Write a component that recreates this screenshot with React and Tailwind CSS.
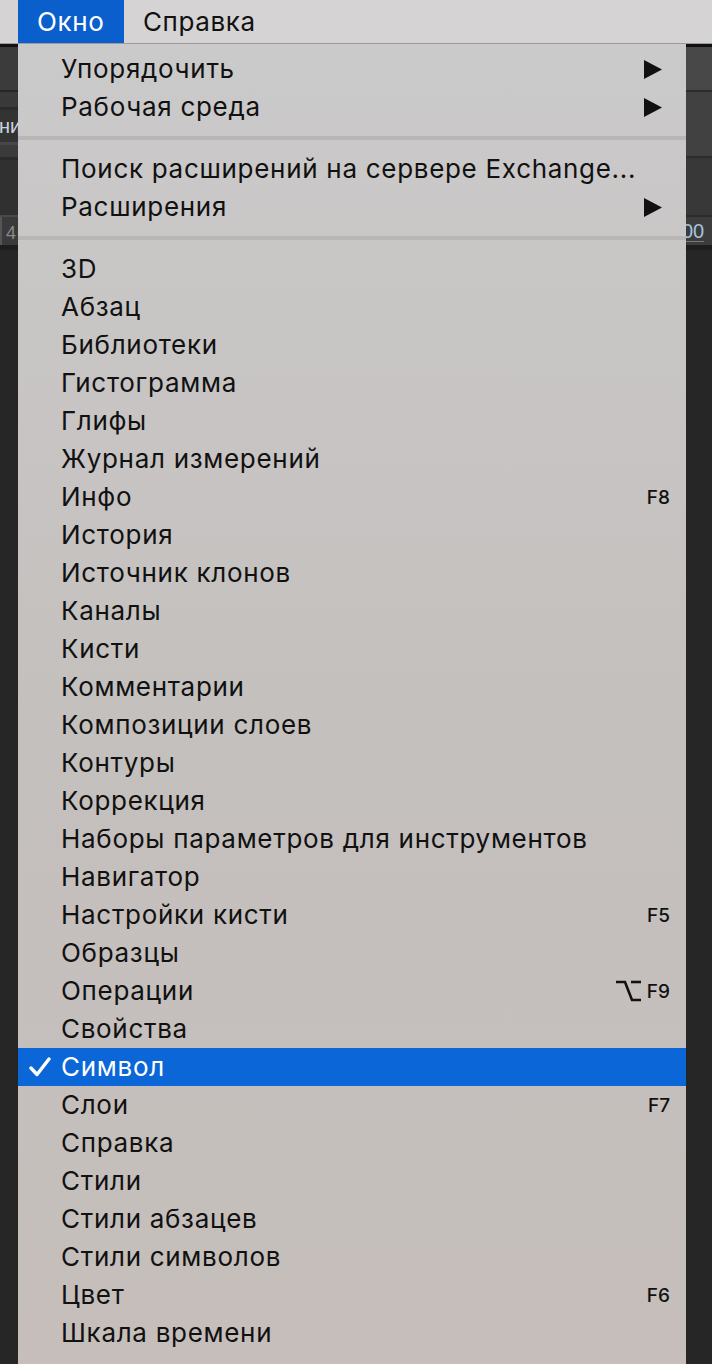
import React from "react";

const groups = [
  [
    { label: "Упорядочить", arrow: true },
    { label: "Рабочая среда", arrow: true },
  ],
  [
    { label: "Поиск расширений на сервере Exchange..." },
    { label: "Расширения", arrow: true },
  ],
  [
    { label: "3D" },
    { label: "Абзац" },
    { label: "Библиотеки" },
    { label: "Гистограмма" },
    { label: "Глифы" },
    { label: "Журнал измерений" },
    { label: "Инфо", key: "F8" },
    { label: "История" },
    { label: "Источник клонов" },
    { label: "Каналы" },
    { label: "Кисти" },
    { label: "Комментарии" },
    { label: "Композиции слоев" },
    { label: "Контуры" },
    { label: "Коррекция" },
    { label: "Наборы параметров для инструментов" },
    { label: "Навигатор" },
    { label: "Настройки кисти", key: "F5" },
    { label: "Образцы" },
    { label: "Операции", key: "F9", opt: true },
    { label: "Свойства" },
    { label: "Символ", checked: true },
    { label: "Слои", key: "F7" },
    { label: "Справка" },
    { label: "Стили" },
    { label: "Стили абзацев" },
    { label: "Стили символов" },
    { label: "Цвет", key: "F6" },
    { label: "Шкала времени" },
  ],
];

function Arrow() {
  return (
    <svg width="18" height="19" viewBox="0 0 18 19" className="ml-auto mr-[8px] shrink-0">
      <polygon points="0,0 18,9.5 0,19" fill="#111" />
    </svg>
  );
}

function Check() {
  return (
    <svg width="22" height="22" viewBox="0 0 22 22" className="absolute left-[11px] top-[8px]">
      <path d="M2 12 L8 18.5 L20 3" fill="none" stroke="#fff" strokeWidth="3.4" strokeLinecap="round" strokeLinejoin="round" />
    </svg>
  );
}

function OptKey() {
  return (
    <svg width="25" height="22" viewBox="0 0 25 22" className="mr-[6px]">
      <path d="M0 2 H9 L16 20 H25" fill="none" stroke="#111" strokeWidth="2.6" />
      <path d="M15 2 H25" fill="none" stroke="#111" strokeWidth="2.6" />
    </svg>
  );
}

function Item({ item }) {
  const active = item.checked;
  return (
    <div
      className={
        "relative h-[38px] flex items-center pl-[43px] pr-[16px] " +
        (active ? "bg-[#0b66d8] text-white" : "text-[#111]")
      }
    >
      {active && <Check />}
      <span className="text-[26px] leading-none tracking-[0.7px] whitespace-nowrap">{item.label}</span>
      {item.arrow && <Arrow />}
      {item.key && (
        <span className="ml-auto flex items-center text-[19px] font-medium leading-none">
          {item.opt && <OptKey />}
          {item.key}
        </span>
      )}
    </div>
  );
}

function Separator() {
  return (
    <div className="h-[24px] flex items-center">
      <div className="h-[4px] w-full bg-[#b9b6b5]" />
    </div>
  );
}

function LeftStrip() {
  return (
    <div className="w-[18px] flex flex-col shrink-0">
      <div className="h-[3px] bg-[#111]" />
      <div className="h-[43px] bg-[#3b3b3b]" />
      <div className="h-[2px] bg-[#262626]" />
      <div className="h-[15px] bg-[#393939]" />
      <div className="h-[3px] bg-[#2a2a2a]" />
      <div className="h-[32px] bg-[#333333] flex items-center overflow-hidden">
        <span className="text-[20px] leading-none text-[#cdd6e0] font-['Liberation_Sans',sans-serif] -ml-[1px]">ни</span>
      </div>
      <div className="h-[3px] bg-[#474747]" />
      <div className="h-[12px] bg-[#3a3a3a]" />
      <div className="h-[3px] bg-[#2a2a2a]" />
      <div className="h-[55px] bg-[#303030]" />
      <div className="h-[2px] bg-[#494949]" />
      <div className="h-[28px] bg-[#3a3a3a] flex items-end overflow-hidden">
        <div className="w-[2px] h-full bg-[#555]" />
        <span className="ml-[4px] text-[18px] leading-[24px] text-[#8a8a8a] font-['Liberation_Sans',sans-serif]">4</span>
      </div>
      <div className="h-[5px] bg-[#1d1d1d]" />
      <div className="flex-1 bg-[#262626]" />
    </div>
  );
}

function RightStrip() {
  return (
    <div className="w-[26px] flex flex-col shrink-0">
      <div className="h-[3px] bg-[#111]" />
      <div className="h-[43px] bg-[#484848]" />
      <div className="h-[2px] bg-[#2c2c2c]" />
      <div className="h-[64px] bg-[#414141]" />
      <div className="h-[2px] bg-[#2c2c2c]" />
      <div className="h-[57px] bg-[#383838]" />
      <div className="h-[2px] bg-[#2c2c2c]" />
      <div className="h-[28px] bg-[#3c3c3c] flex items-center overflow-hidden">
        <span className="-ml-[4px] text-[20px] leading-none text-[#a7c3dc] font-['Liberation_Sans',sans-serif] border-b border-[#777]">00</span>
      </div>
      <div className="h-[5px] bg-[#1d1d1d]" />
      <div className="flex-1 bg-[#262626]" />
    </div>
  );
}

export default function App() {
  return (
    <div className="w-[712px] h-[1364px] overflow-hidden flex flex-col bg-[#262626] font-['Inter',sans-serif]">
      <div className="h-[44px] shrink-0 bg-[#d5d3d3] border-b border-[#9c9a9a] flex items-stretch">
        <div className="w-[18px]" />
        <div className="w-[106px] bg-[#0b5fcc] text-white flex items-center pl-[19px] text-[26px] leading-none tracking-[0.6px]">
          Окно
        </div>
        <div className="flex items-center pl-[19px] text-[26px] leading-none tracking-[0.6px] text-[#111]">Справка</div>
      </div>
      <div className="flex-1 flex min-h-0">
        <LeftStrip />
        <div className="w-[668px] shrink-0 bg-linear-to-b from-[#cbcaca] via-[#c4c0be] to-[#c5bebb] pt-[6px] overflow-hidden">
          {groups.map((g, gi) => (
            <React.Fragment key={gi}>
              {gi > 0 && <Separator />}
              {g.map((it, i) => (
                <Item key={i} item={it} />
              ))}
            </React.Fragment>
          ))}
        </div>
        <RightStrip />
      </div>
    </div>
  );
}
